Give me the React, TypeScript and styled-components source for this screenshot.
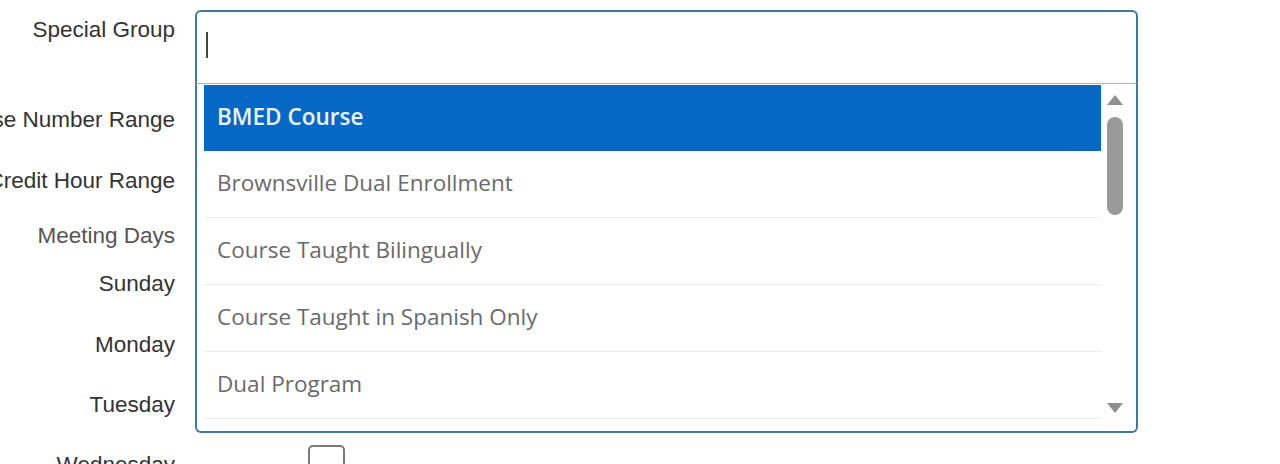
import React from "react";
import styled, { createGlobalStyle } from "styled-components";

const Global = createGlobalStyle`
  html, body { margin: 0; padding: 0; background: #ffffff; overflow: hidden; }
  body { font-family: "Liberation Sans", Arial, sans-serif; }
`;

const Form = styled.div`
  display: flex;
  flex-direction: column;
  width: 1280px;
  height: 464px;
  overflow: hidden;
`;

const Row = styled.div<{ $h: number }>`
  display: grid;
  grid-template-columns: 175px 1fr;
  column-gap: 20px;
  height: ${(p) => p.$h}px;
  flex: none;
`;

const Label = styled.div<{ $muted?: boolean }>`
  display: flex;
  justify-content: flex-end;
  white-space: nowrap;
  padding-top: 17px;
  font-size: 22.5px;
  line-height: 26px;
  color: ${(p) => (p.$muted ? "#555" : "#333")};
  height: 26px;
`;

const Field = styled.div<{ $top?: number }>`
  position: relative;
  padding-top: ${(p) => p.$top ?? 0}px;
`;

const ComboInput = styled.div`
  position: relative;
  box-sizing: border-box;
  width: 943px;
  height: 74px;
  border: 2px solid #42799b;
  border-bottom: 1px solid #b3b3b3;
  border-radius: 6px 6px 0 0;
  background: #fff;
`;

const Caret = styled.span`
  position: absolute;
  left: 9px;
  top: 20px;
  width: 2px;
  height: 26px;
  background: #444;
`;

const Dropdown = styled.div`
  position: absolute;
  z-index: 10;
  left: 0;
  top: 84px;
  box-sizing: border-box;
  width: 943px;
  height: 349px;
  padding: 1px 7px 0 7px;
  display: flex;
  background: #fff;
  border: 2px solid #42799b;
  border-top: none;
  border-radius: 0 0 6px 6px;
  overflow: hidden;
`;

const List = styled.ul`
  list-style: none;
  margin: 0;
  padding: 0;
  width: 897px;
  flex: none;
`;

const Option = styled.li<{ $active?: boolean }>`
  box-sizing: border-box;
  height: ${(p) => (p.$active ? 66 : 67)}px;
  display: flex;
  align-items: center;
  padding: 0 0 4px 13px;
  font-family: "Open Sans", "Noto Sans", sans-serif;
  font-size: 22.5px;
  font-weight: ${(p) => (p.$active ? 600 : 400)};
  color: ${(p) => (p.$active ? "#eaf4ff" : "#6a6a6a")};
  background: ${(p) => (p.$active ? "#0668c5" : "#fff")};
  border-bottom: ${(p) => (p.$active ? "none" : "1px solid #ececec")};
`;

const Scrollbar = styled.div`
  width: 28px;
  flex: none;
  display: flex;
  flex-direction: column;
  align-items: center;
  padding-top: 10px;
  padding-bottom: 18px;
  box-sizing: border-box;
`;

const Arrow = styled.div<{ $down?: boolean }>`
  width: 0;
  height: 0;
  border-left: 8px solid transparent;
  border-right: 8px solid transparent;
  ${(p) =>
    p.$down
      ? "border-top: 10px solid #8f8f8f; margin-top: auto;"
      : "border-bottom: 10px solid #8f8f8f;"}
`;

const Thumb = styled.div`
  margin-top: 12px;
  width: 16px;
  height: 98px;
  border-radius: 8px;
  background: #9a9a9a;
`;

const RangeInput = styled.div`
  box-sizing: border-box;
  width: 200px;
  height: 44px;
  margin-top: 8px;
  border: 1px solid #bbb;
  border-radius: 4px;
`;

const Checkbox = styled.div`
  box-sizing: border-box;
  margin-left: 113px;
  margin-top: 10px;
  width: 37px;
  height: 37px;
  border: 2px solid #7a7a7a;
  border-radius: 5px;
  background: #fff;
`;

const options = [
  "BMED Course",
  "Brownsville Dual Enrollment",
  "Course Taught Bilingually",
  "Course Taught in Spanish Only",
  "Dual Program",
  "Early College High School",
];

const days: [string, number][] = [
  ["Sunday", 61],
  ["Monday", 60],
  ["Tuesday", 60],
  ["Wednesday", 60],
];

export default function App() {
  return (
    <>
      <Global />
      <Form>
        <Row $h={90}>
          <Label>Special Group</Label>
          <Field $top={10}>
            <ComboInput>
              <Caret />
            </ComboInput>
            <Dropdown>
              <List>
                {options.map((o, i) => (
                  <Option key={o} $active={i === 0}>
                    {o}
                  </Option>
                ))}
              </List>
              <Scrollbar>
                <Arrow />
                <Thumb />
                <Arrow $down />
              </Scrollbar>
            </Dropdown>
          </Field>
        </Row>
        <Row $h={61}>
          <Label>Course Number Range</Label>
          <Field>
            <RangeInput />
          </Field>
        </Row>
        <Row $h={55}>
          <Label>Credit Hour Range</Label>
          <Field>
            <RangeInput />
          </Field>
        </Row>
        <Row $h={48}>
          <Label $muted>Meeting Days</Label>
          <Field />
        </Row>
        {days.map(([d, h]) => (
          <Row key={d} $h={h}>
            <Label>{d}</Label>
            <Field>
              <Checkbox />
            </Field>
          </Row>
        ))}
      </Form>
    </>
  );
}
